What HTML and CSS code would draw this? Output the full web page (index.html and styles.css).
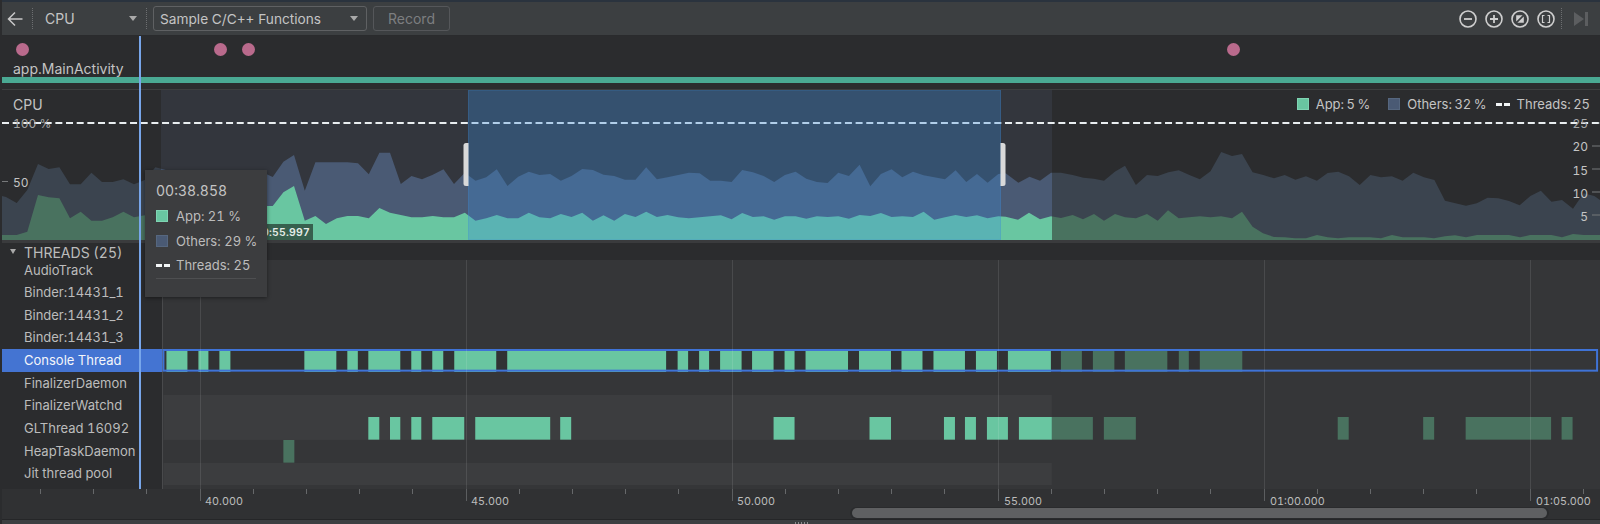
FILE: index.html
```html
<!DOCTYPE html>
<html lang="en">
<head>
<meta charset="utf-8">
<title>CPU Profiler</title>
<link rel="stylesheet" href="styles.css">
</head>
<body>
<div class="app">
  <header class="toolbar">
    <svg class="back" width="16" height="16" viewBox="0 0 16 16"><path d="M15.5 8H1.5M8 1.5L1.5 8L8 14.5"/></svg>
    <span class="dots sep-a"></span>
    <div class="stage-select"><span>CPU</span><i class="caret"></i></div>
    <span class="dots"></span>
    <div class="combo"><span>Sample C/C++ Functions</span><i class="caret"></i></div>
    <button class="record">Record</button>
    <div class="spacer"></div>
    <svg class="zoom-icon" width="18" height="18" viewBox="0 0 18 18"><circle cx="9" cy="9" r="8"/><path d="M5 9H13"/></svg>
    <svg class="zoom-icon" width="18" height="18" viewBox="0 0 18 18"><circle cx="9" cy="9" r="8"/><path d="M5 9H13M9 5V13"/></svg>
    <svg class="zoom-icon" width="18" height="18" viewBox="0 0 18 18"><circle cx="9" cy="9" r="8"/><path class="solid" d="M5.200 5.200H11.600L5.200 11.600Z"/><path class="solid" d="M12.800 6.400V12.800H6.400Z"/></svg>
    <svg class="zoom-icon" width="18" height="18" viewBox="0 0 18 18"><circle cx="9" cy="9" r="8"/><path class="thin" d="M7.500 5.500H5.500V12.500H7.500M10.500 5.500H12.500V12.500H10.500"/></svg>
    <span class="dots sep-end"></span>
    <svg class="end-icon" width="14" height="14" viewBox="0 0 14 14"><path d="M0 0L10 7L0 14ZM11 0H14V14H11Z"/></svg>
  </header>

  <section class="events">
    <i class="pin pin-a"></i><i class="pin pin-b"></i><i class="pin pin-c"></i><i class="pin pin-d"></i>
    <div class="activity-name">app.MainActivity</div>
    <div class="activity-bar"></div>
  </section>

  <section class="cpu">
    <svg class="cpu-chart" width="1598" height="150" viewBox="2 90 1598 150">
      <defs>
        <polygon id="others" points="2,240 2,196 6,197 16.7,203 27.3,190 38,164 48.7,169 59.4,167.3 70,184.3 80.7,184.3 91.4,172.7 102,182 112.7,182 123.4,179.3 134,184.3 144.7,180 155.4,167.3 166,170 177,172 187.4,178 198,176 209,178 219,176 230,180 241,176 251.4,174 262,172 272.7,177 283.4,161.7 294,155 304.8,190.7 315.4,162.3 347.4,162.3 358,163.3 368.8,174.3 379.4,152.7 390,152.7 400.8,184 411.5,176 422,179.3 432.8,174.7 443.5,169.3 454,184 464.8,172.7 475.5,180.7 486.2,177.3 496.8,169.3 507.5,186 518.2,176.7 528.8,171.7 539.5,175 550.2,174 560.8,180.7 571.5,176 582.2,169 592.9,170 603.5,174.7 614.2,176 624.9,179.7 635.5,179.7 646.2,167.3 656.9,179.3 667.5,177.3 678.2,175 688.9,172.7 699.6,173.3 710.2,180.7 720.9,180.7 731.6,182 742.2,170 752.9,172.3 763.6,176 774.2,182 784.9,175 795.6,171.7 806.3,178.7 816.9,182 827.6,183 838.3,172.7 848.9,176 859.6,164.7 870.3,186.3 880.9,174 891.6,169.3 902.3,177.3 913,171.7 923.6,175.3 934.3,177.3 945,179.3 955.6,170.3 966.3,182 977,174 987.6,182.7 998.3,174 1005.7,173.3 1018.4,182.7 1029.5,176.7 1040,180.7 1051,172.7 1061,172.7 1072.7,175 1083.4,177.7 1093.8,178.7 1104,180.7 1114.8,171.7 1125,165.7 1135.9,185 1147,175 1157.7,176 1168.4,172.3 1178.7,170.3 1189.4,175 1199.8,179.3 1210.5,171.3 1221.2,152 1232,156 1242,154 1252.6,172.3 1263.3,175 1274,178.3 1284.7,175 1295.4,179.7 1306,176.3 1316.9,180.7 1327.6,173 1338.3,171.7 1349,176.3 1359.7,185 1370.4,175 1381,177.3 1391.9,176.3 1402.6,180.7 1413.3,172.7 1424,177.3 1434.4,180 1445,200.7 1455.4,203.3 1466,205.7 1476.8,203.3 1487.6,197.7 1498.3,198.3 1509,201 1519.7,205.3 1530.4,196 1540.8,190.7 1551.5,201.7 1562,200 1573,208.7 1583.6,193.3 1594.3,196 1600,200 1600,240"/>
        <polygon id="app" points="2,240 2,235 16.7,235 27.3,231.7 38,195 48.7,197.3 59.4,198.3 70,218.3 80.7,211.7 91.4,220.7 102,220.7 112.7,217.3 123.4,211.7 134,217.3 144.7,215.3 155,214 262,206 272.7,206 283.4,192.3 294,186 304.8,220.7 315.4,216 326,224 336.8,218.3 347.4,216 358,216 368.8,218.3 379.4,208 390,212.7 400.8,215 411.5,217.3 422,217.3 432.8,216 443.5,217.3 454,217.3 464.8,212.7 475.5,220.7 486.2,218.3 496.8,215 507.5,218.3 518.2,218.3 528.8,212.7 539.5,217.3 550.2,218.3 560.8,214 571.5,217 582.2,212.7 592.9,220.7 603.5,215.3 614.2,220.7 624.9,214 635.5,217 646.2,211.7 656.9,217 667.5,215 678.2,217.3 688.9,218.3 699.6,217.3 710.2,216.3 720.9,215.3 731.6,219.3 742.2,213 752.9,217 763.6,216.3 774.2,219.7 784.9,216.3 795.6,216.3 806.3,218.7 816.9,216.3 827.6,217 838.3,216.3 848.9,218.7 859.6,215 870.3,216 880.9,213 891.6,217 902.3,216.3 913,217 923.6,211.7 934.3,219.7 945,217.3 955.6,215 966.3,217 977,215.3 987.6,218.3 998.3,216.3 1005.7,216.7 1018,219.7 1029,212.7 1040,219.3 1051,216.3 1061,218 1072.7,215 1083,219.3 1094,214 1104,220.7 1115,214 1125,217.3 1136,218.3 1147,214 1157.7,220.7 1168,210.3 1178.7,218.3 1189,217.3 1200,216.3 1210.5,217.3 1221,216.3 1232,218.3 1242,211.7 1252.6,226.7 1263,233.3 1274,237 1284.7,237.3 1295,238.3 1306,238.3 1317,235 1327.6,237.3 1338,238.3 1349,237.3 1370,237.3 1381,238.3 1392,235 1402.6,237.3 1424,237.3 1434,238.3 1445,236.3 1455,235.3 1466,237.3 1477,235 1509,235 1520,237.3 1530,235 1551.5,235 1562,237.3 1573,234 1584,235 1600,235 1600,240"/>
        <clipPath id="range-clip"><rect x="161" y="90" width="891" height="150"/></clipPath>
      </defs>
      <use href="#others" class="others-dim"/>
      <use href="#app" class="app-dim"/>
      <g clip-path="url(#range-clip)">
        <rect class="range" x="161" y="90" width="891" height="150"/>
        <use href="#others" class="others-on"/>
        <use href="#app" class="app-on"/>
      </g>
      <rect class="tag" x="240" y="224" width="73" height="16"/>
      <text class="tag-text" x="310" y="236" text-anchor="end">00:55.997</text>
      <path class="tick" d="M2 123H8M2 181.500H8M1592 123H1600M1592 146H1600M1592 169H1600M1592 192H1600M1592 215H1600"/>
      <path class="dash" d="M2 123H1600"/>
      <text class="scale" x="13" y="127.500">100 %</text>
      <text class="scale bright" x="13" y="186.500">50</text>
      <text class="scale" x="1588" y="127.500" text-anchor="end">25</text>
      <text class="scale bright" x="1588" y="151" text-anchor="end">20</text>
      <text class="scale bright" x="1588" y="174.500" text-anchor="end">15</text>
      <text class="scale bright" x="1588" y="197.500" text-anchor="end">10</text>
      <text class="scale bright" x="1588" y="221" text-anchor="end">5</text>
      <rect class="selection" x="468.500" y="90" width="532" height="150"/>
      <path class="handle" d="M468.500 143H466Q463.500 143 463.500 145.500V183.500Q463.500 186 466 186H468.500Z"/>
      <path class="handle" d="M1000.500 143H1003Q1005.500 143 1005.500 145.500V183.500Q1005.500 186 1003 186H1000.500Z"/>
    </svg>
    <div class="cpu-title">CPU</div>
    <div class="legend">
      <i class="swatch swatch-app"></i><span class="legend-text">App: 5 %</span>
      <i class="swatch swatch-others gap-l"></i><span class="legend-text">Others: 32 %</span>
      <i class="dash-key gap-s"></i><span class="legend-text">Threads: 25</span>
    </div>
  </section>

  <div class="threads-head"><i class="tri"></i><span>THREADS (25)</span></div>

  <section class="threads">
    <div class="row row-first"><div class="name">AudioTrack</div><div class="track"></div></div>
    <div class="row"><div class="name">Binder:14431_1</div><div class="track"></div></div>
    <div class="row"><div class="name">Binder:14431_2</div><div class="track"></div></div>
    <div class="row"><div class="name">Binder:14431_3</div><div class="track"></div></div>
    <div class="row">
      <div class="name selected">Console Thread</div>
      <svg class="track" width="1438" height="22.67" viewBox="162 0 1438 22.67">
        <g class="sleep"><rect x="187" y="0" width="11" height="23"/><rect x="208" y="0" width="11" height="23"/><rect x="230" y="0" width="74" height="23"/><rect x="336" y="0" width="11" height="23"/><rect x="357.500" y="0" width="10.500" height="23"/><rect x="400" y="0" width="11" height="23"/><rect x="421" y="0" width="11" height="23"/><rect x="443" y="0" width="11" height="23"/><rect x="496" y="0" width="11" height="23"/><rect x="666" y="0" width="11.500" height="23"/><rect x="688" y="0" width="11" height="23"/><rect x="709" y="0" width="11" height="23"/><rect x="741.500" y="0" width="10.500" height="23"/><rect x="773.500" y="0" width="11" height="23"/><rect x="794.500" y="0" width="11" height="23"/><rect x="848" y="0" width="11" height="23"/><rect x="891" y="0" width="10.500" height="23"/><rect x="922.500" y="0" width="11" height="23"/><rect x="965" y="0" width="11" height="23"/><rect x="997" y="0" width="11" height="23"/><rect x="1051" y="0" width="10" height="23"/><rect x="1082" y="0" width="11" height="23"/><rect x="1114.500" y="0" width="10.500" height="23"/><rect x="1167.500" y="0" width="11.500" height="23"/><rect x="1189" y="0" width="11" height="23"/></g>
        <g class="bar"><rect x="166" y="0" width="21" height="23"/><rect x="198" y="0" width="10" height="23"/><rect x="219" y="0" width="11" height="23"/><rect x="304" y="0" width="32" height="23"/><rect x="347" y="0" width="10.500" height="23"/><rect x="368" y="0" width="32" height="23"/><rect x="411" y="0" width="10" height="23"/><rect x="432" y="0" width="11" height="23"/><rect x="454" y="0" width="42" height="23"/><rect x="507" y="0" width="159" height="23"/><rect x="677.500" y="0" width="10.500" height="23"/><rect x="699" y="0" width="10" height="23"/><rect x="720" y="0" width="21.500" height="23"/><rect x="752" y="0" width="21.500" height="23"/><rect x="784.500" y="0" width="10" height="23"/><rect x="805.500" y="0" width="42.500" height="23"/><rect x="859" y="0" width="32" height="23"/><rect x="901.500" y="0" width="21" height="23"/><rect x="933.500" y="0" width="31.500" height="23"/><rect x="976" y="0" width="21" height="23"/><rect x="1008" y="0" width="43" height="23"/></g>
        <g class="bar-dim"><rect x="1061" y="0" width="21" height="23"/><rect x="1093" y="0" width="21.500" height="23"/><rect x="1125" y="0" width="42.500" height="23"/><rect x="1179" y="0" width="10" height="23"/><rect x="1200" y="0" width="42.500" height="23"/></g>
        <rect class="focus" x="163" y="1" width="1434.500" height="20.670"/>
      </svg>
    </div>
    <div class="row"><div class="name">FinalizerDaemon</div><div class="track"></div></div>
    <div class="row">
      <div class="name">FinalizerWatchd</div>
      <svg class="track" width="1438" height="22.67" viewBox="162 0 1438 22.67"><rect class="stripe" x="163" y="0" width="889" height="23"/></svg>
    </div>
    <div class="row">
      <div class="name">GLThread 16092</div>
      <svg class="track" width="1438" height="22.67" viewBox="162 0 1438 22.67">
        <rect class="stripe" x="163" y="0" width="889" height="23"/>
        <g class="bar"><rect x="368" y="0" width="11" height="22.670"/><rect x="389.700" y="0" width="10.300" height="22.670"/><rect x="411" y="0" width="10" height="22.670"/><rect x="432" y="0" width="32" height="22.670"/><rect x="475" y="0" width="75" height="22.670"/><rect x="560" y="0" width="11" height="22.670"/><rect x="773.500" y="0" width="21" height="22.670"/><rect x="869.500" y="0" width="21.500" height="22.670"/><rect x="944" y="0" width="11" height="22.670"/><rect x="965" y="0" width="11" height="22.670"/><rect x="987" y="0" width="21" height="22.670"/><rect x="1019" y="0" width="33" height="22.670"/></g>
        <g class="bar-dim"><rect x="1052" y="0" width="41" height="22.670"/><rect x="1104" y="0" width="32" height="22.670"/><rect x="1338" y="0" width="11" height="22.670"/><rect x="1423.500" y="0" width="11" height="22.670"/><rect x="1466" y="0" width="85.500" height="22.670"/><rect x="1562" y="0" width="11" height="22.670"/></g>
      </svg>
    </div>
    <div class="row">
      <div class="name">HeapTaskDaemon</div>
      <svg class="track" width="1438" height="22.67" viewBox="162 0 1438 22.67"><rect class="bar-dim-solo" x="283" y="0" width="11" height="22.670"/></svg>
    </div>
    <div class="row">
      <div class="name">Jit thread pool</div>
      <svg class="track" width="1438" height="22.67" viewBox="162 0 1438 22.67"><rect class="stripe" x="163" y="0" width="889" height="23"/></svg>
    </div>
    <svg class="gridlines" width="1438" height="229" viewBox="162 260 1438 229"><path d="M162.500 260V489M200.500 260V489M466.500 260V489M732.500 260V489M998.500 260V489M1264.500 260V489M1530.500 260V489"/></svg>
  </section>

  <div class="axis">
    <svg width="1598" height="31" viewBox="2 489 1598 31">
      <path class="minor" d="M40.500 489v5M93.500 489v5M146.500 489v5M253.500 489v5M306.500 489v5M359.500 489v5M412.500 489v5M519.500 489v5M572.500 489v5M625.500 489v5M678.500 489v5M785.500 489v5M838.500 489v5M891.500 489v5M944.500 489v5M1051.500 489v5M1104.500 489v5M1157.500 489v5M1210.500 489v5M1317.500 489v5M1370.500 489v5M1423.500 489v5M1476.500 489v5M1583.500 489v5"/>
      <path class="major" d="M200.500 489v12M466.500 489v12M732.500 489v12M998.500 489v12M1264.500 489v12M1530.500 489v12"/>
      <text class="time" x="205" y="504.500">40.000</text>
      <text class="time" x="471" y="504.500">45.000</text>
      <text class="time" x="737" y="504.500">50.000</text>
      <text class="time" x="1004" y="504.500">55.000</text>
      <text class="time" x="1270" y="504.500">01:00.000</text>
      <text class="time" x="1536" y="504.500">01:05.000</text>
      <rect class="thumb-track" x="850" y="507" width="699" height="12" rx="6"/>
      <rect class="thumb" x="852" y="508" width="695" height="10" rx="5"/>
    </svg>
  </div>
  <div class="splitter"><i></i></div>

  <div class="cursor"></div>

  <aside class="tooltip">
    <div class="tip-time">00:38.858</div>
    <div class="tip-line"><i class="swatch swatch-app"></i><span>App: 21 %</span></div>
    <div class="tip-line"><i class="swatch swatch-others"></i><span>Others: 29 %</span></div>
    <div class="tip-line"><i class="dash-key"></i><span>Threads: 25</span></div>
    <div class="tip-rule"></div>
  </aside>
</div>
</body>
</html>
```
FILE: styles.css
```css
* { box-sizing: border-box; }
html, body { margin: 0; height: 100%; }
body { background: #1f2022; overflow: hidden; font-family: Inter, "Liberation Sans", sans-serif; font-size: 13px; color: #bcbcbc; font-variant-numeric: tabular-nums; }
svg { display: block; }
i { display: block; }

.app { position: relative; width: 1600px; height: 524px; padding-left: 2px; display: flex; flex-direction: column; background: #2b2c2e; }

/* toolbar */
.toolbar { height: 36px; flex: none; display: flex; align-items: center; background: #3c3f41; border-top: 2px solid #2a333e; border-bottom: 1px solid #2a2b2d; padding-left: 5px; }
.back path { fill: none; stroke: #c8c8c8; stroke-width: 1.5; }
.dots { width: 0; height: 21px; border-left: 1px dotted #6d6f71; flex: none; }
.sep-a { margin-left: 9px; }
.stage-select { width: 113px; padding: 0 9px 0 12px; display: flex; align-items: center; justify-content: space-between; font-size: 14px; color: #c4c4c4; }
.caret { width: 0; height: 0; border-left: 4.500px solid transparent; border-right: 4.500px solid transparent; border-top: 5px solid #a9a9a9; }
.combo { width: 214px; height: 25px; margin-left: 6px; padding: 0 8px 0 6px; display: flex; align-items: center; justify-content: space-between; border: 1px solid #5f6163; border-radius: 3px; font-size: 13.700px; color: #c4c4c4; white-space: nowrap; }
.record { width: 77px; height: 25px; margin-left: 6px; padding: 0; background: transparent; border: 1px solid #55575a; border-radius: 3px; font: inherit; font-size: 14px; color: #7c7e80; }
.spacer { flex: 1; }
.zoom-icon { margin-right: 8px; }
.zoom-icon circle { fill: none; stroke: #cfcfcf; stroke-width: 1.600; }
.zoom-icon path { fill: none; stroke: #cfcfcf; stroke-width: 1.800; }
.zoom-icon path.thin { stroke-width: 1.200; }
.zoom-icon path.solid { fill: #cfcfcf; stroke: none; }
.sep-end { margin-left: -2px; }
.end-icon { margin: 0 12px 0 12px; }
.end-icon path { fill: #5c5e60; }

/* events */
.events { position: relative; height: 54px; flex: none; }
.pin { position: absolute; top: 6.500px; width: 13px; height: 13px; border-radius: 50%; background: #b96a8c; }
.pin-a { left: 14px; }
.pin-b { left: 212px; }
.pin-c { left: 240px; }
.pin-d { left: 1225px; }
.activity-name { position: absolute; left: 11px; top: 24px; font-size: 14px; color: #c4c4c4; }
.activity-bar { position: absolute; left: 0; right: 0; top: 41px; height: 6px; background: #4aa993; }
.events::after { content: ""; position: absolute; left: 0; right: 0; bottom: 0; height: 1px; background: #3d3e40; }

/* cpu */
.cpu { position: relative; height: 150px; flex: none; }
.others-dim { fill: #3b444f; }
.app-dim { fill: #49725f; }
.range { fill: #33363d; }
.others-on { fill: #4a5a74; }
.app-on { fill: #69c6a1; }
.selection { fill: rgba(60, 141, 217, .32); stroke: rgba(60, 141, 217, .35); stroke-width: 1; }
.handle { fill: #d9d9d9; }
.tag { fill: #37604e; }
.tag-text { font-size: 10.500px; font-weight: 600; letter-spacing: .2px; fill: #e4ece8; }
.tick { stroke: #77797b; stroke-width: 1; fill: none; }
.scale { font-size: 12px; fill: #a4a5a6; }
.scale.bright { fill: #c4c4c4; }
.dash { stroke: #e9eef0; stroke-width: 2; stroke-dasharray: 7 3.670; fill: none; }
.cpu-title { position: absolute; left: 11px; top: 6px; font-size: 14px; color: #c4c4c4; }
.legend { position: absolute; right: 10px; top: 6px; display: flex; align-items: center; font-size: 13px; word-spacing: -1px; color: #c4c4c4; }
.swatch { width: 12px; height: 12px; flex: none; }
.swatch-app { background: #69c6a1; border: 1px solid #7fd4b3; }
.swatch-others { background: #4a5a74; border: 1px solid #56677f; }
.legend-text { margin-left: 7px; }
.gap-l { margin-left: 18px; }
.gap-s { margin-left: 9px; }
.dash-key { width: 14px; height: 3px; flex: none; background: linear-gradient(90deg, #f2f5f6 0 6px, transparent 6px 8px, #f2f5f6 8px 14px); }

/* threads */
.threads-head { position: relative; height: 20px; flex: none; padding: 1px 0 0 22px; border-top: 3px solid #3a3b3d; display: flex; align-items: center; font-size: 14px; color: #bcbcbc; }
.tri { position: absolute; left: 8px; top: 6px; width: 0; height: 0; border-left: 3.500px solid transparent; border-right: 3.500px solid transparent; border-top: 5px solid #a9a9a9; }
.threads { position: relative; height: 229px; flex: none; display: flex; flex-direction: column; background: linear-gradient(90deg, #2b2c2e 0 160px, #353638 160px); }
.row { height: 22.670px; flex: none; display: grid; grid-template-columns: 160px 1438px; }
.row-first { height: 21.330px; }
.name { padding: 0 0 1px 22px; display: flex; align-items: center; font-size: 13px; color: #bcbcbc; white-space: nowrap; }
.name.selected { background: #4474d2; color: #f4f6fa; }
.stripe { fill: #3c3d3f; }
.bar rect { fill: #69c6a1; }
.bar-dim rect, .bar-dim-solo { fill: #49725f; }
.sleep rect { fill: #313234; }
.focus { fill: none; stroke: #3f73d6; stroke-width: 2; }
.gridlines { position: absolute; left: 160px; top: 0; }
.gridlines path { stroke: rgba(255, 255, 255, .1); stroke-width: 1; fill: none; }

/* axis */
.axis { height: 31px; flex: none; background: #303133; border-bottom: 1px solid #252628; }
.minor { stroke: #66686a; stroke-width: 1; fill: none; }
.major { stroke: #5c5e60; stroke-width: 1; fill: none; }
.time { font-size: 10.800px; fill: #bcbcbc; }
.thumb-track { fill: #2a2b2d; }
.thumb { fill: #5f6062; }
.splitter { flex: 1; background: #3c3f41; display: flex; justify-content: center; align-items: flex-end; }
.splitter i { width: 15px; height: 2px; background-image: radial-gradient(circle, #8a8c8e .8px, transparent 1px); background-size: 3px 2px; }

/* overlays */
.cursor { position: absolute; left: 139px; top: 36px; width: 2px; height: 453px; background: #78a6ea; }
.tooltip { position: absolute; left: 145px; top: 170px; width: 122px; height: 127px; padding: 12px 11px 0; background: #3c3d3f; box-shadow: 0 1px 4px rgba(0, 0, 0, .45); color: #bcbcbc; font-size: 13px; white-space: nowrap; }
.tip-time { font-size: 14px; height: 17px; line-height: 17px; color: #c4c4c4; }
.tip-line { height: 24.500px; display: flex; align-items: center; }
.tip-line span { margin-left: 8px; }
.tip-time + .tip-line { margin-top: 5px; }
.tip-line .dash-key { margin-right: -2px; }
.tip-rule { height: 1px; margin-top: 0; background: #4e4f51; }
```
